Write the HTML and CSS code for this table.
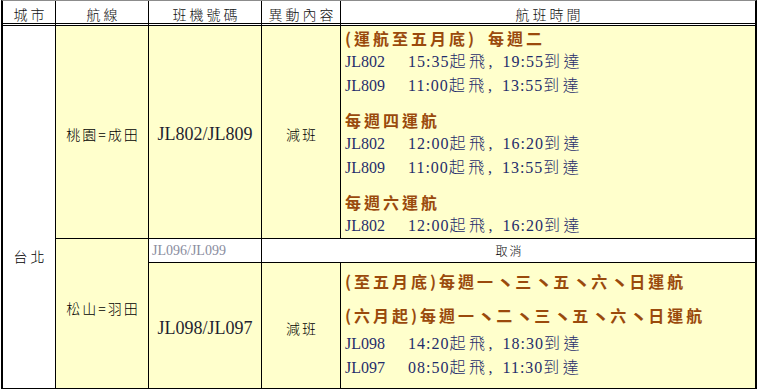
FILE: index.html
```html
<!DOCTYPE html>
<html lang="zh-Hant">
<head>
<meta charset="utf-8">
<title>航班異動</title>
<link rel="stylesheet" href="styles.css">
</head>
<body>
<div class="sheet">
  <div class="hd">城市</div>
  <div class="hd">航線</div>
  <div class="hd">班機號碼</div>
  <div class="hd">異動內容</div>
  <div class="hd last">航班時間</div>

  <div class="cell city">台北</div>
  <div class="cell route route-a yl">桃園=成田</div>
  <div class="cell fnos fnos-a yl">JL802/JL809</div>
  <div class="cell change change-a yl">減班</div>
  <div class="cell sched sched-a yl">
    <div class="grp">
      <div class="ttl">(運航至五月底)&ensp;每週二</div>
      <div class="fl"><span class="no">JL802</span>15:35<span class="k">起飛</span>,&ensp;19:55<span class="k">到達</span></div>
      <div class="fl"><span class="no">JL809</span>11:00<span class="k">起飛</span>,&ensp;13:55<span class="k">到達</span></div>
    </div>
    <div class="grp">
      <div class="ttl">每週四運航</div>
      <div class="fl"><span class="no">JL802</span>12:00<span class="k">起飛</span>,&ensp;16:20<span class="k">到達</span></div>
      <div class="fl"><span class="no">JL809</span>11:00<span class="k">起飛</span>,&ensp;13:55<span class="k">到達</span></div>
    </div>
    <div class="grp">
      <div class="ttl">每週六運航</div>
      <div class="fl"><span class="no">JL802</span>12:00<span class="k">起飛</span>,&ensp;16:20<span class="k">到達</span></div>
    </div>
  </div>

  <div class="cell route route-b yl">松山=羽田</div>
  <div class="cell old">JL096/JL099</div>
  <div class="cell cancel">取消</div>

  <div class="cell fnos fnos-b yl">JL098/JL097</div>
  <div class="cell change change-b yl">減班</div>
  <div class="cell sched sched-b yl">
    <div class="ttl">(至五月底)每週一<span class="dun">丶</span>三<span class="dun">丶</span>五<span class="dun">丶</span>六<span class="dun">丶</span>日運航</div>
    <div class="ttl ttl-next">(六月起)每週一<span class="dun">丶</span>二<span class="dun">丶</span>三<span class="dun">丶</span>五<span class="dun">丶</span>六<span class="dun">丶</span>日運航</div>
    <div class="grp grp-tight">
      <div class="fl"><span class="no">JL098</span>14:20<span class="k">起飛</span>,&ensp;18:30<span class="k">到達</span></div>
      <div class="fl"><span class="no">JL097</span>08:50<span class="k">起飛</span>,&ensp;11:30<span class="k">到達</span></div>
    </div>
  </div>
</div>
</body>
</html>
```

FILE: styles.css
```css
html, body {
  margin: 0;
  padding: 0;
  background: #ffffff;
}

body {
  font-family: "Noto Sans CJK TC", sans-serif;
  color: #000000;
}

.sheet {
  display: grid;
  grid-template-columns: 53px 93px 113px 79px 414px;
  grid-template-rows: 25px 213px 24px 126px;
  width: max-content;
  margin-left: 1px;
  border-top: 1px solid #8c8c8c;
  border-left: 2px solid #000000;
  border-right: 2px solid #000000;
}

.hd {
  box-sizing: border-box;
  display: flex;
  align-items: center;
  justify-content: center;
  padding-top: 4px;
  padding-left: 3px;
  border-right: 1px solid #000000;
  border-bottom: 3px double #000000;
  font-size: 14px;
  font-weight: 300;
  letter-spacing: 3px;
  line-height: 1;
  color: #111111;
  background: #ffffff;
}

.hd.last {
  border-right: 0;
}

.cell {
  box-sizing: border-box;
  border-right: 1px solid #000000;
  border-bottom: 1px solid #000000;
  background: #ffffff;
  display: flex;
  align-items: center;
  justify-content: center;
  font-weight: 300;
  line-height: 1;
}

.yl {
  background: #ffffcc;
}

.city {
  grid-column: 1;
  grid-row: 2 / 5;
  padding-top: 98px;
  padding-left: 3px;
  font-size: 14px;
  letter-spacing: 3px;
}

.route {
  grid-column: 2;
  font-size: 14px;
  letter-spacing: 2px;
  padding-left: 2px;
}

.route-a {
  grid-row: 2;
  padding-top: 3px;
}

.route-b {
  grid-row: 3 / 5;
  padding-bottom: 12px;
}

.fnos {
  grid-column: 3;
  font-family: "Liberation Serif", serif;
  font-weight: 400;
  font-size: 18px;
  color: #1e1e30;
}

.fnos-a {
  grid-row: 2;
  padding-top: 3px;
}

.fnos-b {
  grid-row: 4;
  padding-top: 4px;
}

.change {
  grid-column: 4;
  font-size: 14px;
  letter-spacing: 2px;
  padding-left: 2px;
}

.change-a {
  grid-row: 2;
  padding-top: 3px;
}

.change-b {
  grid-row: 4;
  padding-top: 4px;
}

.old {
  grid-column: 3;
  grid-row: 3;
  justify-content: flex-start;
  padding-left: 3px;
  font-family: "Liberation Serif", serif;
  font-weight: 400;
  font-size: 14px;
  color: #8a8c9e;
}

.cancel {
  grid-column: 4 / 6;
  grid-row: 3;
  border-right: 0;
  font-size: 12px;
  letter-spacing: 2px;
  padding-left: 2px;
}

.sched {
  grid-column: 5;
  border-right: 0;
  display: block;
  padding-left: 4px;
}

.sched-a {
  grid-row: 2;
}

.sched-b {
  grid-row: 4;
  padding-top: 6px;
}

.grp + .grp {
  margin-top: 10px;
}

.grp-tight {
  margin-top: 5px;
}

.ttl-next {
  margin-top: 10px;
}

.ttl {
  height: 24px;
  line-height: 24px;
  white-space: nowrap;
  font-family: "Noto Sans CJK TC", sans-serif;
  font-size: 16px;
  font-weight: 700;
  letter-spacing: 3px;
  color: #9a4a0c;
}

.dun {
  font-size: 19px;
  letter-spacing: 0;
  line-height: 1;
  vertical-align: -3px;
}

.fl {
  height: 24px;
  line-height: 24px;
  white-space: nowrap;
  font-family: "Liberation Serif", "Noto Sans CJK TC", serif;
  font-size: 16px;
  font-weight: 400;
  letter-spacing: 1px;
  color: #1f2d6b;
}

.no {
  display: inline-block;
  width: 63px;
  letter-spacing: 0;
}

.k {
  font-family: "Noto Sans CJK TC", sans-serif;
  font-size: 16px;
  font-weight: 300;
  letter-spacing: 3.5px;
  line-height: 1;
}
```
